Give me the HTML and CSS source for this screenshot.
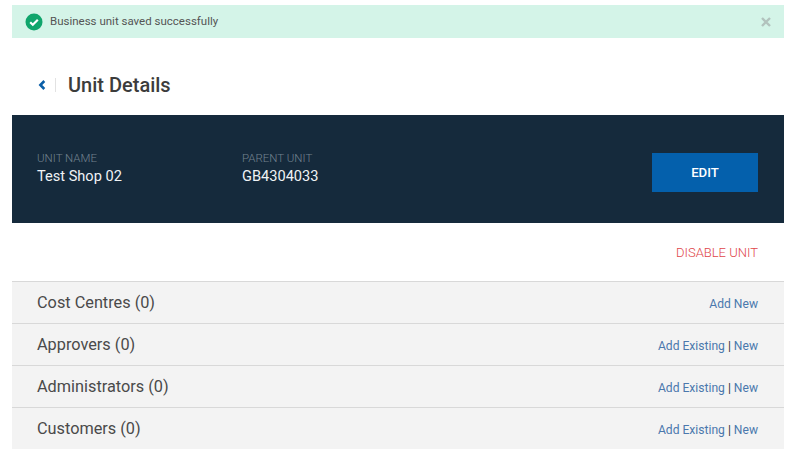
FILE: index.html
```html
<!DOCTYPE html>
<html lang="en">
<head>
  <meta charset="UTF-8" />
  <title>Unit Details</title>
  <link rel="stylesheet" href="styles.css">
</head>
<body>
  <div class="alert">
    <svg class="alert-icon" width="18" height="18" viewBox="0 0 18 18">
      <circle cx="9" cy="9" r="8.5" fill="#10a56c"/>
      <path d="M5.2 9.3l2.6 2.5 5-5" fill="none" stroke="#fff" stroke-width="2.2"/>
    </svg>
    <span class="alert-text">Business unit saved successfully</span>
    <svg class="alert-close" width="10" height="10" viewBox="0 0 10 10">
      <path d="M1 1l8 8M9 1l-8 8" fill="none" stroke="#b2c2bd" stroke-width="2.4"/>
    </svg>
  </div>

  <div class="title-row">
    <svg class="back" width="8" height="10" viewBox="0 0 8 10">
      <path d="M6.3 1L2.4 5l3.9 4" fill="none" stroke="#0b5fa8" stroke-width="2.6"/>
    </svg>
    <span class="title-sep"></span>
    <h1>Unit Details</h1>
  </div>

  <div class="banner">
    <div class="field field-name">
      <div class="field-label">UNIT NAME</div>
      <div class="field-value">Test Shop 02</div>
    </div>
    <div class="field">
      <div class="field-label">PARENT UNIT</div>
      <div class="field-value">GB4304033</div>
    </div>
    <button class="edit-btn">EDIT</button>
  </div>

  <div class="disable-row"><a href="#">DISABLE UNIT</a></div>

  <div class="rows">
    <div class="row">
      <span class="row-name">Cost Centres (0)</span>
      <span class="row-links"><a href="#">Add New</a></span>
    </div>
    <div class="row">
      <span class="row-name">Approvers (0)</span>
      <span class="row-links"><a href="#">Add Existing</a> | <a href="#">New</a></span>
    </div>
    <div class="row">
      <span class="row-name">Administrators (0)</span>
      <span class="row-links"><a href="#">Add Existing</a> | <a href="#">New</a></span>
    </div>
    <div class="row">
      <span class="row-name">Customers (0)</span>
      <span class="row-links"><a href="#">Add Existing</a> | <a href="#">New</a></span>
    </div>
  </div>
</body>
</html>
```

FILE: styles.css
```css
html, body {
  height: 449px;
  overflow: hidden;
}

body {
  margin: 0;
  padding: 5px 16px 0 12px;
  background-color: #fff;
  font-family: Roboto, Arial, sans-serif;
  color: #444;
}

a {
  color: #4a78ad;
  text-decoration: none;
}

.alert {
  display: flex;
  align-items: center;
  height: 33px;
  padding: 0 13px;
  background-color: #d4f4e8;
}

.alert-icon {
  margin-right: 7px;
}

.alert-text {
  flex: 1;
  padding-bottom: 2px;
  font-size: 11.5px;
  color: #555;
}

.title-row {
  display: flex;
  align-items: center;
  height: 30px;
  margin-top: 32px;
  padding-left: 26px;
}

.title-sep {
  width: 1px;
  height: 14px;
  margin: 0 12px 0 9px;
  background-color: #e2e2e2;
}

h1 {
  margin: 0;
  font-size: 20px;
  font-weight: 500;
  color: #3c3c3c;
}

.banner {
  display: flex;
  align-items: center;
  height: 108px;
  margin-top: 15px;
  padding: 0 26px 0 25px;
  background-color: #152a3c;
}

.field {
  flex: 1;
  padding-bottom: 1px;
}

.field-name {
  flex: 0 0 205px;
}

.field-label {
  font-size: 11.5px;
  font-weight: 300;
  line-height: 14px;
  color: #72828f;
}

.field-value {
  margin-top: 2px;
  font-size: 14.6px;
  line-height: 19px;
  color: #f0f3f5;
}

.edit-btn {
  width: 106px;
  height: 39px;
  margin-top: 6px;
  border: none;
  background-color: #0460ac;
  color: #fff;
  font-family: Roboto, Arial, sans-serif;
  font-size: 13.2px;
  font-weight: 500;
}

.disable-row {
  display: flex;
  justify-content: flex-end;
  align-items: center;
  height: 58px;
  padding-right: 26px;
  font-size: 13px;
  font-weight: 300;
}

.disable-row a {
  color: #e0464a;
}

.row {
  display: flex;
  justify-content: space-between;
  align-items: center;
  height: 41px;
  padding: 0 26px 0 25px;
  border-top: 1px solid #d8d8d8;
  background-color: #f3f3f3;
}

.row-name {
  font-size: 16.3px;
  color: #4a4a4a;
}

.row-links {
  padding-top: 2px;
  font-size: 12.1px;
  color: #333;
}
```
